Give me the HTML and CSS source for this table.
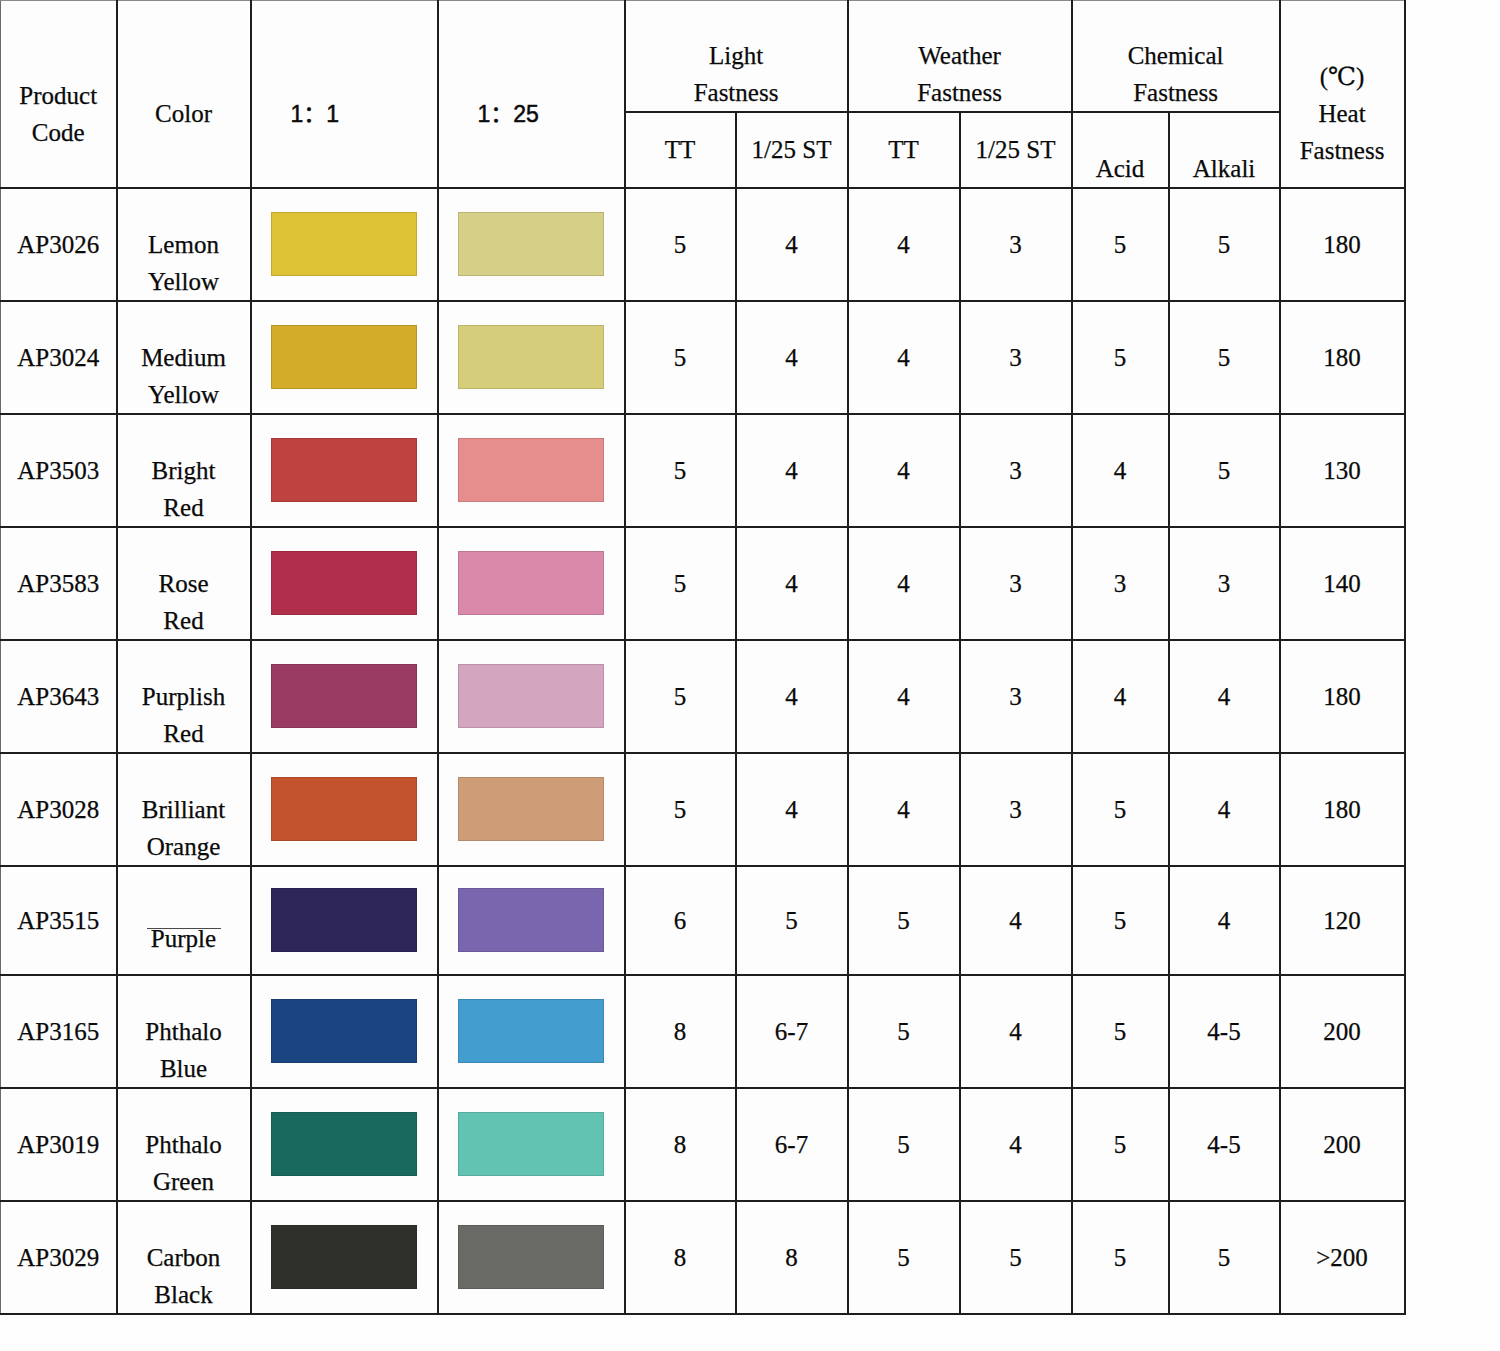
FILE: index.html
```html
<!DOCTYPE html>
<html lang="en">
<head>
<meta charset="utf-8">
<title>Pigment Paste Color Chart</title>
<link rel="stylesheet" href="styles.css">
</head>
<body>
<table class="chart">
  <colgroup>
    <col class="c-code"><col class="c-color"><col class="c-sw"><col class="c-sw">
    <col class="c-tt"><col class="c-st"><col class="c-st"><col class="c-st">
    <col class="c-acid"><col class="c-alk"><col class="c-heat">
  </colgroup>
  <thead>
    <tr class="head-top">
      <th rowspan="2" class="h-main">Product<br>Code</th>
      <th rowspan="2" class="h-main">Color</th>
      <th rowspan="2" class="h-main h-ratio">1：1</th>
      <th rowspan="2" class="h-main h-ratio">1：25</th>
      <th colspan="2" class="h-group">Light<br>Fastness</th>
      <th colspan="2" class="h-group">Weather<br>Fastness</th>
      <th colspan="2" class="h-group">Chemical<br>Fastness</th>
      <th rowspan="2" class="h-main">(℃)<br>Heat<br>Fastness</th>
    </tr>
    <tr class="head-sub">
      <th>TT</th><th>1/25 ST</th><th>TT</th><th>1/25 ST</th>
      <th class="h-low">Acid</th><th class="h-low">Alkali</th>
    </tr>
  </thead>
  <tbody>
    <tr class="row">
      <td>AP3026</td><td class="name">Lemon<br>Yellow</td>
      <td><div class="swatch sw-lemon"></div></td><td><div class="swatch sw-lemon-t"></div></td>
      <td>5</td><td>4</td><td>4</td><td>3</td><td>5</td><td>5</td><td>180</td>
    </tr>
    <tr class="row">
      <td>AP3024</td><td class="name">Medium<br>Yellow</td>
      <td><div class="swatch sw-medium"></div></td><td><div class="swatch sw-medium-t"></div></td>
      <td>5</td><td>4</td><td>4</td><td>3</td><td>5</td><td>5</td><td>180</td>
    </tr>
    <tr class="row">
      <td>AP3503</td><td class="name">Bright<br>Red</td>
      <td><div class="swatch sw-bright"></div></td><td><div class="swatch sw-bright-t"></div></td>
      <td>5</td><td>4</td><td>4</td><td>3</td><td>4</td><td>5</td><td>130</td>
    </tr>
    <tr class="row">
      <td>AP3583</td><td class="name">Rose<br>Red</td>
      <td><div class="swatch sw-rose"></div></td><td><div class="swatch sw-rose-t"></div></td>
      <td>5</td><td>4</td><td>4</td><td>3</td><td>3</td><td>3</td><td>140</td>
    </tr>
    <tr class="row">
      <td>AP3643</td><td class="name">Purplish<br>Red</td>
      <td><div class="swatch sw-purplish"></div></td><td><div class="swatch sw-purplish-t"></div></td>
      <td>5</td><td>4</td><td>4</td><td>3</td><td>4</td><td>4</td><td>180</td>
    </tr>
    <tr class="row">
      <td>AP3028</td><td class="name">Brilliant<br>Orange</td>
      <td><div class="swatch sw-orange"></div></td><td><div class="swatch sw-orange-t"></div></td>
      <td>5</td><td>4</td><td>4</td><td>3</td><td>5</td><td>4</td><td>180</td>
    </tr>
    <tr class="row row-short">
      <td>AP3515</td><td class="name"><span class="struck">Purple</span></td>
      <td><div class="swatch sw-purple"></div></td><td><div class="swatch sw-purple-t"></div></td>
      <td>6</td><td>5</td><td>5</td><td>4</td><td>5</td><td>4</td><td>120</td>
    </tr>
    <tr class="row">
      <td>AP3165</td><td class="name">Phthalo<br>Blue</td>
      <td><div class="swatch sw-blue"></div></td><td><div class="swatch sw-blue-t"></div></td>
      <td>8</td><td>6-7</td><td>5</td><td>4</td><td>5</td><td>4-5</td><td>200</td>
    </tr>
    <tr class="row">
      <td>AP3019</td><td class="name">Phthalo<br>Green</td>
      <td><div class="swatch sw-green"></div></td><td><div class="swatch sw-green-t"></div></td>
      <td>8</td><td>6-7</td><td>5</td><td>4</td><td>5</td><td>4-5</td><td>200</td>
    </tr>
    <tr class="row row-last">
      <td>AP3029</td><td class="name">Carbon<br>Black</td>
      <td><div class="swatch sw-black"></div></td><td><div class="swatch sw-black-t"></div></td>
      <td>8</td><td>8</td><td>5</td><td>5</td><td>5</td><td>5</td><td>&gt;200</td>
    </tr>
  </tbody>
</table>
</body>
</html>
```
FILE: styles.css
```css
html, body {
  margin: 0;
  padding: 0;
  background: #fefefe;
}

.chart {
  border-collapse: collapse;
  table-layout: fixed;
  width: 1405px;
  font-family: "Liberation Serif", "DejaVu Serif", "Noto Sans CJK SC", serif;
  font-size: 25px;
  line-height: 37px;
  color: #0a0a0a;
  -webkit-text-stroke: 0.25px #0a0a0a;
  background: #fdfdfd;
}

.c-code { width: 116px; }
.c-color { width: 134px; }
.c-sw { width: 187px; }
.c-tt { width: 111px; }
.c-st { width: 112px; }
.c-acid { width: 97px; }
.c-alk { width: 111px; }
.c-heat { width: 125px; }

.chart th,
.chart td {
  border: 2px solid #1e1e1e;
  padding: 0;
  text-align: center;
  vertical-align: middle;
  font-weight: normal;
}

.chart tr > :first-child { border-left: 1px solid #6a6a6a; }
.chart .head-top > th { border-top: 1px solid #8a8a8a; }

.head-top { height: 111px; }
.head-sub { height: 76px; }

.chart .h-main { padding-top: 40px; }

.chart .h-ratio {
  text-align: left;
  padding-left: 39px;
  padding-top: 42px;
  font-family: "Liberation Sans", "Noto Sans CJK SC", sans-serif;
  font-size: 23px;
  -webkit-text-stroke: 0.5px #0a0a0a;
}

.chart .h-group { vertical-align: bottom; }
.chart .h-low { vertical-align: bottom; }

.row { height: 113px; }
.row-short { height: 109px; }
.row-last { height: 112px; }

.chart .name { padding-top: 37px; }

.struck { position: relative; }
.struck::before {
  content: "";
  position: absolute;
  left: -4px;
  right: -5px;
  top: 3px;
  height: 1px;
  background: #4a4a4a;
}

.swatch {
  width: 146px;
  height: 64px;
  margin: 0 auto;
  box-sizing: border-box;
  border: 1px solid rgba(0, 0, 0, 0.12);
}

.sw-lemon { background: #dcc234; }
.sw-lemon-t { background: #d6cf88; }
.sw-medium { background: #d3ac2a; }
.sw-medium-t { background: #d5cd7a; }
.sw-bright { background: #be4240; }
.sw-bright-t { background: #e68d8d; }
.sw-rose { background: #b22f4c; }
.sw-rose-t { background: #d989aa; }
.sw-purplish { background: #993b62; }
.sw-purplish-t { background: #d4a5be; }
.sw-orange { background: #c3532e; }
.sw-orange-t { background: #cf9c78; }
.sw-purple { background: #2e2558; }
.sw-purple-t { background: #7966ae; }
.sw-blue { background: #1b4580; }
.sw-blue-t { background: #439dcf; }
.sw-green { background: #19695d; }
.sw-green-t { background: #63c3b2; }
.sw-black { background: #30302b; }
.sw-black-t { background: #696965; }
```
